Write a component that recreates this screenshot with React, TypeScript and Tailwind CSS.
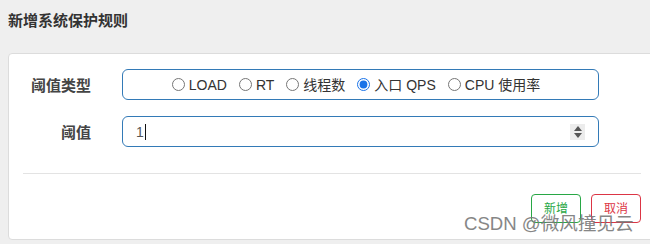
import React, { useState } from 'react';

const types = ['LOAD', 'RT', '线程数', '入口 QPS', 'CPU 使用率'];

const App: React.FC = () => {
  const [grade, setGrade] = useState('入口 QPS');

  return (
    <div
      className="relative w-[650px] h-[244px] overflow-hidden bg-[#efefef] text-[#333]"
      style={{ fontFamily: '"Liberation Sans", "Noto Sans CJK SC", sans-serif' }}
    >
      <div className="h-[53px] pl-[8px] pt-[11px]">
        <h3 className="text-[15px] font-bold leading-[20px] text-[#333]">新增系统保护规则</h3>
      </div>

      <div className="ml-[8px] w-[648px] h-[187px] bg-white border border-[#dcdcdc] rounded-[4px] px-[14px] pt-[15px]">
        <div className="flex flex-col gap-[16px]">
          <div className="flex items-start">
            <label className="w-[68px] text-right pt-[7px] text-[15px] font-bold leading-[20px] text-[#444]">阈值类型</label>
            <div className="ml-[31px] w-[477px] h-[31px] border border-[#337ab7] rounded-[6px] flex items-center justify-center gap-[12px] pr-[9px] text-[14px] text-[#333]">
              {types.map((t) => (
                <label key={t} className="flex items-center cursor-pointer">
                  <input
                    type="radio"
                    name="grade"
                    checked={grade === t}
                    onChange={() => setGrade(t)}
                    className="m-0 w-[13px] h-[13px] accent-[#1a73e8]"
                  />
                  <span className="ml-[4px] leading-[18px]">{t}</span>
                </label>
              ))}
            </div>
          </div>

          <div className="flex items-start">
            <label className="w-[68px] text-right pt-[7px] text-[15px] font-bold leading-[20px] text-[#444]">阈值</label>
            <div className="relative ml-[31px] w-[477px] h-[31px] border border-[#337ab7] rounded-[6px] flex items-center pl-[13px] text-[14px] text-[#555]">
              <span className="leading-[18px]">1</span>
              <span className="ml-[1px] w-px h-[16px] bg-[#111]" />
              <div className="absolute right-[13px] top-[7px] w-[15px] h-[16px] bg-[#ececec] flex flex-col items-center justify-center gap-[2px]">
                <svg width="8" height="5" viewBox="0 0 8 5"><path d="M0 5 L4 0 L8 5 Z" fill="#555" /></svg>
                <svg width="8" height="5" viewBox="0 0 8 5"><path d="M0 0 L4 5 L8 0 Z" fill="#555" /></svg>
              </div>
            </div>
          </div>
        </div>

        <div className="mt-[26px] h-px bg-[#e3e3e3]" />

        <div className="mt-[20px] flex justify-end gap-[10px]">
          <button className="w-[50px] h-[29px] border border-[#28a745] rounded-[4px] text-[12px] text-[#28a745] bg-white">新增</button>
          <button className="w-[50px] h-[29px] border border-[#dc3545] rounded-[4px] text-[12px] text-[#dc3545] bg-white">取消</button>
        </div>
      </div>

      {/* watermark overlays the buttons in the reference */}
      <div className="absolute left-[464px] top-[212px] text-[18.6px] leading-[24px] text-[#7a7a7a] opacity-90 whitespace-nowrap pointer-events-none">
        CSDN @微风撞见云
      </div>
    </div>
  );
};

export default App;
